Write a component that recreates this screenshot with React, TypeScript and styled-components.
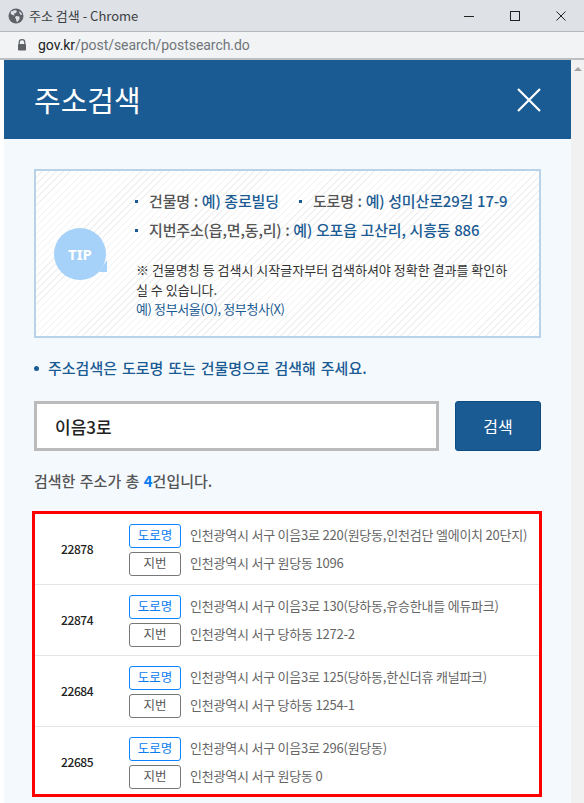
import React from 'react';
import styled, { createGlobalStyle } from 'styled-components';

const FONT = '"Noto Sans CJK KR", "Noto Sans", sans-serif';

const GlobalStyle = createGlobalStyle`
  html, body {
    margin: 0;
    padding: 0;
    background: #fff;
  }
  body {
    font-family: ${FONT};
    overflow: hidden;
  }
  * {
    box-sizing: border-box;
  }
`;

const Page = styled.div`
  width: 584px;
  height: 803px;
  display: flex;
  flex-direction: column;
  overflow: hidden;
`;

const TitleBar = styled.div`
  height: 32px;
  display: flex;
  align-items: center;
  padding-left: 8px;
  background: #dee1e6;
  border-bottom: 1px solid #b4b6b9;
`;

const WindowTitle = styled.div`
  flex: 1;
  margin-left: 5px;
  font-size: 13px;
  color: #3c4043;
  font-family: "Noto Sans CJK KR", sans-serif;
`;

const WindowButton = styled.div`
  width: 46px;
  display: flex;
  justify-content: center;
  align-items: center;
  color: #222;
`;

const AddressBar = styled.div`
  height: 28px;
  display: flex;
  align-items: center;
  padding-left: 17px;
  background: #f1f3f4;
  border-bottom: 2px solid #bcbec0;
`;

const Url = styled.div`
  margin-left: 11px;
  font-family: "Roboto", sans-serif;
  font-size: 14px;
  letter-spacing: -0.05px;
  color: #70757a;
`;

const Host = styled.span`
  color: #202124;
`;

const Viewport = styled.div`
  flex: 1;
  display: flex;
  padding-left: 4px;
  background: #fff;
`;

const Main = styled.div`
  width: 567px;
  background: #f4f9fe;
`;

const Scrollbar = styled.div`
  width: 13px;
  display: flex;
  justify-content: center;
  padding-top: 7px;
  background: #f1f1f1;
`;

const ScrollArrow = styled.div`
  width: 0;
  height: 0;
  border-left: 4px solid transparent;
  border-right: 4px solid transparent;
  border-bottom: 4px solid #a3a3a3;
`;

const Header = styled.div`
  height: 79px;
  display: flex;
  align-items: center;
  justify-content: space-between;
  padding: 0 30px 0 30px;
  background: #1b5b93;
`;

const HeaderTitle = styled.h1`
  margin: 0;
  font-size: 29px;
  font-weight: 400;
  color: #fff;
  line-height: 1;
`;

const Body = styled.div`
  padding: 30px 30px 0;
`;

const TipBox = styled.div`
  height: 169px;
  display: flex;
  align-items: flex-start;
  padding: 15px 24px 0 18px;
  border: 2px solid #b8d2ea;
  background: repeating-linear-gradient(135deg, #fff 0 4px, #f1f1f1 4px 5px);
`;

const TipBadge = styled.div`
  flex: none;
  position: relative;
  width: 52px;
  height: 52px;
  margin-top: 42px;
  margin-right: 29px;
  border-radius: 50%;
  display: flex;
  align-items: center;
  justify-content: center;
  background: #a6d1f8;
  color: #fff;
  font-family: "Noto Sans", sans-serif;
  font-size: 15px;
  font-weight: 700;

  &::after {
    content: '';
    position: absolute;
    right: -1px;
    bottom: 8px;
    width: 0;
    height: 0;
    border-left: 8px solid transparent;
    border-bottom: 12px solid #a6d1f8;
  }
`;

const TipContent = styled.div`
  flex: 1;
  min-width: 0;
`;

const TipLine = styled.div`
  display: flex;
  height: 29px;
  align-items: center;
  font-size: 15px;
  font-weight: 500;
  letter-spacing: -0.15px;
  word-spacing: 0.5px;
  color: #555;
  white-space: nowrap;
`;

const TipItem = styled.span`
  position: relative;
  padding-left: 14px;
  margin-right: 20px;

  &::before {
    content: '';
    position: absolute;
    left: 0;
    top: 10px;
    width: 3px;
    height: 3px;
    background: #1b5b93;
  }
`;

const TipValue = styled.span`
  color: #1b5b93;
`;

const TipNote = styled.p`
  margin: 16px 0 0 1px;
  font-size: 13px;
  line-height: 19.5px;
  color: #333;
`;

const TipExample = styled.span`
  letter-spacing: -0.4px;
  color: #1b5b93;
`;

const Guide = styled.div`
  position: relative;
  margin-top: 19px;
  padding-left: 14px;
  font-size: 15px;
  line-height: 22px;
  font-weight: 500;
  word-spacing: 1.5px;
  color: #1b5b93;

  &::before {
    content: '';
    position: absolute;
    left: 0;
    top: 9px;
    width: 5px;
    height: 5px;
    border-radius: 50%;
    background: #1b5b93;
  }
`;

const SearchRow = styled.div`
  display: flex;
  gap: 16px;
  margin-top: 22px;
`;

const SearchInput = styled.input`
  width: 405px;
  height: 50px;
  padding: 0 18px;
  border: 3px solid #bbb;
  border-radius: 0;
  outline: none;
  background: #fff;
  font-family: ${FONT};
  font-size: 17px;
  font-weight: 500;
  color: #222;
`;

const SearchButton = styled.button`
  width: 86px;
  height: 50px;
  padding: 0;
  border: 1px solid #0f4c81;
  border-radius: 3px;
  background: #1b5b93;
  color: #fff;
  font-family: ${FONT};
  font-size: 16px;
`;

const CountText = styled.div`
  margin-top: 19px;
  font-size: 15px;
  line-height: 22px;
  font-weight: 500;
  word-spacing: 1px;
  color: #555;
`;

const CountNumber = styled.span`
  color: #0a7cf0;
  font-weight: 700;
`;

const ResultList = styled.div`
  margin: 19px -1px 0 -2px;
  border: 3px solid #f00;
  background: #fff;
`;

const ResultRow = styled.div`
  display: flex;
  align-items: center;
  padding: 10px 0 8px 26px;
  border-bottom: 1px solid #e4e4e4;

  &:last-child {
    padding-bottom: 5px;
    border-bottom: none;
  }
`;

const Zip = styled.div`
  width: 68px;
  flex: none;
  padding-bottom: 3px;
  font-size: 12px;
  font-weight: 500;
  letter-spacing: -0.4px;
  color: #222;
`;

const AddressGrid = styled.div`
  display: grid;
  grid-template-columns: 52px 1fr;
  grid-auto-rows: 24px;
  column-gap: 9px;
  row-gap: 4px;
  align-items: center;
`;

const Tag = styled.div<{ $road?: boolean }>`
  height: 24px;
  display: flex;
  align-items: center;
  justify-content: center;
  padding-bottom: 3px;
  border: 1px solid ${(p) => (p.$road ? '#0a84ff' : '#777')};
  border-radius: 3px;
  background: #fff;
  font-size: 12.5px;
  color: ${(p) => (p.$road ? '#0a7cf0' : '#555')};
`;

const AddressText = styled.div`
  padding-bottom: 4px;
  font-size: 13px;
  letter-spacing: -0.22px;
  color: #666;
  white-space: nowrap;
`;

const results = [
  { zip: '22878', road: '인천광역시 서구 이음3로 220(원당동,인천검단 엘에이치 20단지)', lot: '인천광역시 서구 원당동 1096' },
  { zip: '22874', road: '인천광역시 서구 이음3로 130(당하동,유승한내들 에듀파크)', lot: '인천광역시 서구 당하동 1272-2' },
  { zip: '22684', road: '인천광역시 서구 이음3로 125(당하동,한신더휴 캐널파크)', lot: '인천광역시 서구 당하동 1254-1' },
  { zip: '22685', road: '인천광역시 서구 이음3로 296(원당동)', lot: '인천광역시 서구 원당동 0' },
];

function GlobeIcon() {
  return (
    <svg width="16" height="16" viewBox="0 0 16 16">
      <circle cx="8" cy="8" r="7.5" fill="#5f6368" />
      <path d="M3 3.5 L7 2 L9 3 L8 5 L6 5.5 L6.5 7.5 L4.5 7 L2.5 5.5 Z" fill="#dee1e6" />
      <path d="M8 8 L11.5 8.5 L11.5 11 L9.5 14 L8.5 13.5 L8 11 L7 9.5 Z" fill="#dee1e6" />
      <path d="M11 3 L13.5 5 L14 7 L12 6.5 Z" fill="#dee1e6" />
    </svg>
  );
}

function LockIcon() {
  return (
    <svg width="10" height="12" viewBox="0 0 10 12">
      <path d="M2.2 5V3.4a2.8 2.8 0 0 1 5.6 0V5" fill="none" stroke="#5f6368" strokeWidth="1.2" />
      <rect x="1" y="5" width="8" height="6.5" rx="0.8" fill="#5f6368" />
    </svg>
  );
}

export default function App() {
  return (
    <Page>
      <GlobalStyle />
      <TitleBar>
        <GlobeIcon />
        <WindowTitle>주소 검색 - Chrome</WindowTitle>
        <WindowButton>
          <svg width="10" height="10" viewBox="0 0 10 10">
            <path d="M0 5.5H10" stroke="#222" strokeWidth="1" />
          </svg>
        </WindowButton>
        <WindowButton>
          <svg width="10" height="10" viewBox="0 0 10 10">
            <rect x="0.5" y="0.5" width="9" height="9" fill="none" stroke="#222" strokeWidth="1" />
          </svg>
        </WindowButton>
        <WindowButton>
          <svg width="10" height="10" viewBox="0 0 10 10">
            <path d="M0.5 0.5L9.5 9.5M9.5 0.5L0.5 9.5" stroke="#222" strokeWidth="1" />
          </svg>
        </WindowButton>
      </TitleBar>
      <AddressBar>
        <LockIcon />
        <Url>
          <Host>gov.kr</Host>/post/search/postsearch.do
        </Url>
      </AddressBar>
      <Viewport>
        <Main>
          <Header>
            <HeaderTitle>주소검색</HeaderTitle>
            <svg width="24" height="24" viewBox="0 0 24 24">
              <path d="M1 1L23 23M23 1L1 23" stroke="#fff" strokeWidth="2.2" />
            </svg>
          </Header>
          <Body>
            <TipBox>
              <TipBadge>TIP</TipBadge>
              <TipContent>
                <TipLine>
                  <TipItem>
                    건물명 : <TipValue>예) 종로빌딩</TipValue>
                  </TipItem>
                  <TipItem>
                    도로명 : <TipValue>예) 성미산로29길 17-9</TipValue>
                  </TipItem>
                </TipLine>
                <TipLine>
                  <TipItem>
                    지번주소(읍,면,동,리) : <TipValue>예) 오포읍 고산리, 시흥동 886</TipValue>
                  </TipItem>
                </TipLine>
                <TipNote>
                  ※ 건물명칭 등 검색시 시작글자부터 검색하셔야 정확한 결과를 확인하실 수 있습니다.
                  <br />
                  <TipExample>예) 정부서울(O), 정부청사(X)</TipExample>
                </TipNote>
              </TipContent>
            </TipBox>
            <Guide>주소검색은 도로명 또는 건물명으로 검색해 주세요.</Guide>
            <SearchRow>
              <SearchInput defaultValue="이음3로" />
              <SearchButton>검색</SearchButton>
            </SearchRow>
            <CountText>
              검색한 주소가 총 <CountNumber>4</CountNumber>건입니다.
            </CountText>
            <ResultList>
              {results.map((item) => (
                <ResultRow key={item.zip}>
                  <Zip>{item.zip}</Zip>
                  <AddressGrid>
                    <Tag $road>도로명</Tag>
                    <AddressText>{item.road}</AddressText>
                    <Tag>지번</Tag>
                    <AddressText>{item.lot}</AddressText>
                  </AddressGrid>
                </ResultRow>
              ))}
            </ResultList>
          </Body>
        </Main>
        <Scrollbar>
          <ScrollArrow />
        </Scrollbar>
      </Viewport>
    </Page>
  );
}
